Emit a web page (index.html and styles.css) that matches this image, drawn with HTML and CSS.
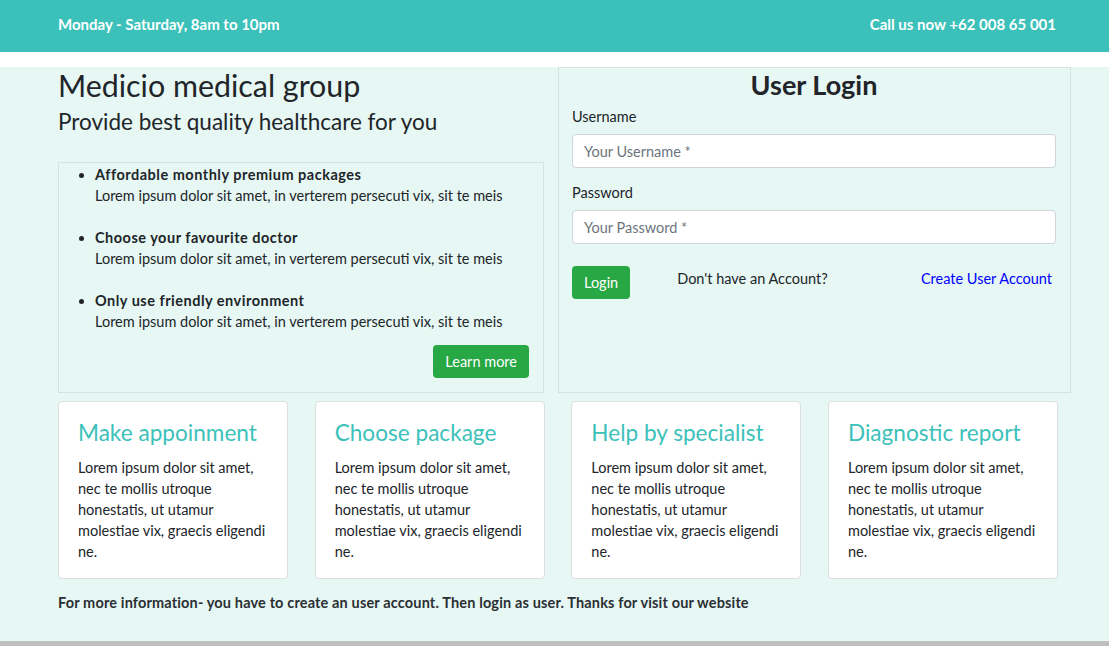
FILE: index.html
```html
<!DOCTYPE html>
<html lang="en">
<head>
<meta charset="utf-8">
<title>Medicio medical group</title>
<link rel="stylesheet" href="styles.css">
</head>
<body>
<header class="topbar">
  <div class="topbar-inner">
    <span>Monday - Saturday, 8am to 10pm</span>
    <span>Call us now +62 008 65 001</span>
  </div>
</header>
<div class="strip"></div>
<main class="page">
  <div class="hero">
    <section class="intro">
      <h1 class="title">Medicio medical group</h1>
      <h2 class="subtitle">Provide best quality healthcare for you</h2>
      <div class="features">
        <ul class="feature-list">
          <li><strong>Affordable monthly premium packages</strong><span>Lorem ipsum dolor sit amet, in verterem persecuti vix, sit te meis</span></li>
          <li><strong>Choose your favourite doctor</strong><span>Lorem ipsum dolor sit amet, in verterem persecuti vix, sit te meis</span></li>
          <li><strong>Only use friendly environment</strong><span>Lorem ipsum dolor sit amet, in verterem persecuti vix, sit te meis</span></li>
        </ul>
        <div class="features-actions"><a class="btn" href="#">Learn more</a></div>
      </div>
    </section>
    <section class="login">
      <h3 class="login-title">User Login</h3>
      <form class="login-form">
        <label class="field-label" for="u">Username</label>
        <input class="field" id="u" type="text" placeholder="Your Username *">
        <label class="field-label" for="p">Password</label>
        <input class="field" id="p" type="password" placeholder="Your Password *">
        <div class="login-actions">
          <button class="btn" type="button">Login</button>
          <span class="no-account">Don't have an Account?</span>
          <a class="create-link" href="#">Create User Account</a>
        </div>
      </form>
    </section>
  </div>
  <div class="cards">
    <div class="card"><h4 class="card-title">Make appoinment</h4><p class="card-text">Lorem ipsum dolor sit amet, nec te mollis utroque honestatis, ut utamur molestiae vix, graecis eligendi ne.</p></div>
    <div class="card"><h4 class="card-title">Choose package</h4><p class="card-text">Lorem ipsum dolor sit amet, nec te mollis utroque honestatis, ut utamur molestiae vix, graecis eligendi ne.</p></div>
    <div class="card"><h4 class="card-title">Help by specialist</h4><p class="card-text">Lorem ipsum dolor sit amet, nec te mollis utroque honestatis, ut utamur molestiae vix, graecis eligendi ne.</p></div>
    <div class="card"><h4 class="card-title">Diagnostic report</h4><p class="card-text">Lorem ipsum dolor sit amet, nec te mollis utroque honestatis, ut utamur molestiae vix, graecis eligendi ne.</p></div>
  </div>
  <p class="note">For more information- you have to create an user account. Then login as user. Thanks for visit our website</p>
</main>
<div class="bottom-bar"></div>
</body>
</html>
```
FILE: styles.css
```css
* { box-sizing: border-box; }
html, body { margin: 0; padding: 0; }
body {
  font-family: "Lato", "Open Sans", sans-serif;
  font-size: 14.5px;
  line-height: 1.5;
  color: #212529;
  background: #ffffff;
}
.topbar {
  background: #3bc1b9;
  height: 52px;
  color: #fff;
  font-weight: 700;
  font-size: 15px;
}
.topbar-inner {
  display: flex;
  justify-content: space-between;
  align-items: center;
  padding: 13px 53px 0 58px;
}
.strip { height: 15px; background: #fff; }
.page {
  background: #e6f7f4;
  height: 574px;
  padding: 0 0 0 58px;
}
.hero {
  display: flex;
  gap: 14px;
  align-items: stretch;
}
.intro { width: 486px; }
.title {
  margin: 0;
  font-size: 30.4px;
  font-weight: 400;
  line-height: 36px;
}
.subtitle {
  margin: 5px 0 27px;
  font-size: 22.5px;
  font-weight: 400;
  line-height: 27px;
}
.features {
  border: 1px solid #d6e2e1;
  padding: 1px 14px 14px 0;
}
.feature-list {
  margin: 0;
  padding: 0 0 0 36px;
}
.feature-list li { margin-bottom: 21px; line-height: 21px; }
.feature-list li:last-child { margin-bottom: 13px; }
.feature-list strong { display: block; font-weight: 700; letter-spacing: 0.5px; }
.feature-list span { display: block; }
.features-actions { display: flex; justify-content: flex-end; }
.btn {
  display: inline-block;
  background: #28a745;
  color: #fff;
  border: none;
  border-radius: 4px;
  padding: 6px 12px;
  font-family: inherit;
  font-size: 14.5px;
  line-height: 21px;
  text-decoration: none;
}
.features-actions .btn { height: 33px; }
.login {
  width: 513px;
  border: 1px solid #d6e2e1;
  padding: 0 14px 0 13px;
}
.login-title {
  margin: 0;
  text-align: center;
  font-size: 27px;
  font-weight: 700;
  line-height: 34px;
}
.login-form { display: flex; flex-direction: column; }
.field-label { display: block; margin: 4px 0 7px; line-height: 21px; }
.field {
  height: 34px;
  border: 1px solid #ced4da;
  border-radius: 4px;
  background: #fff;
  padding: 0 11px;
  font-family: inherit;
  font-size: 14.5px;
  margin-bottom: 10px;
}
.field::placeholder { color: #6c757d; }
.login-actions {
  display: flex;
  align-items: flex-start;
  margin-top: 12px;
}
.login-actions .btn { height: 33px; }
.no-account { margin-left: 47px; padding-top: 2px; }
.create-link {
  margin-left: auto;
  margin-right: 4px;
  padding-top: 2px;
  color: #0000ff;
  text-decoration: none;
}
.cards {
  display: grid;
  grid-template-columns: repeat(4, 230px);
  justify-content: space-between;
  width: 1000px;
  margin-top: 8px;
}
.card {
  background: #fff;
  border: 1px solid #dcdfe0;
  border-radius: 4px;
  padding: 16px 19px 17px 19px;
  height: 178px;
}
.card-title {
  margin: 0 0 10px;
  color: #3bc1b9;
  font-size: 22.6px;
  font-weight: 400;
  line-height: 29px;
}
.card-text { margin: 0; line-height: 21px; }
.note {
  margin: 13px 0 0;
  font-weight: 700;
  letter-spacing: 0.15px;
  color: #2b2f33;
}
.bottom-bar { height: 6px; background: #bfbfbf; }
```
